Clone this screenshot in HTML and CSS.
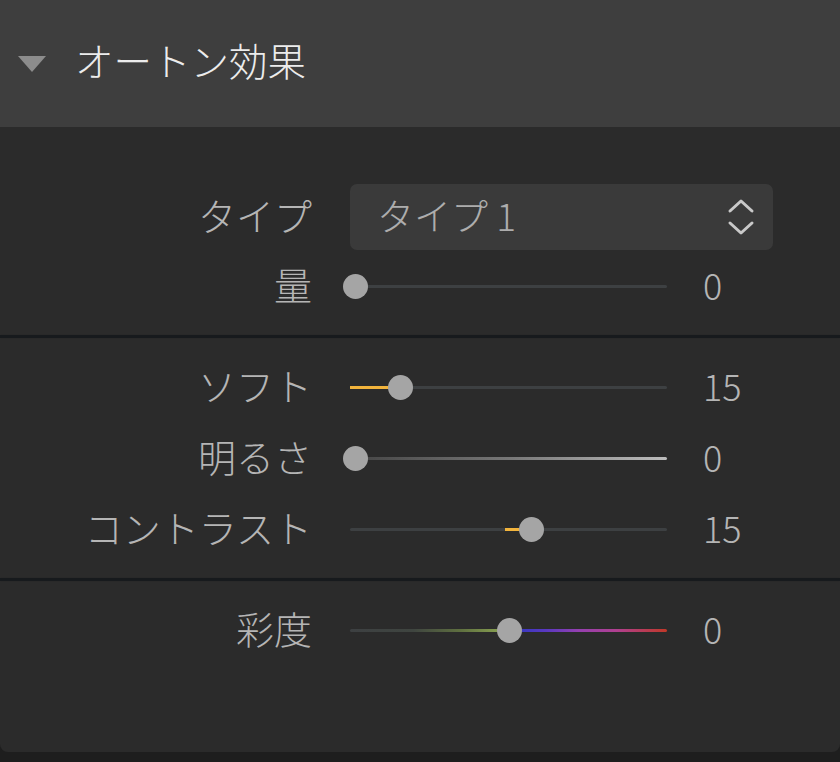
FILE: index.html
```html
<!DOCTYPE html>
<html lang="ja">
<head>
<meta charset="utf-8">
<title>オートン効果</title>
<link rel="stylesheet" href="styles.css">
</head>
<body>
<div class="panel">
  <div class="header">
    <span class="tri"></span>
    <h1 class="title">オートン効果</h1>
  </div>

  <div class="section section-first">
    <div class="row row-select">
      <span class="label">タイプ</span>
      <div class="select">
        <span class="select-text">タイプ 1</span>
        <svg class="chev" width="28" height="38" viewBox="0 0 28 38">
          <path d="M3 13 L14 3 L25 13" fill="none" stroke="#c9c9c9" stroke-width="3" stroke-linecap="round" stroke-linejoin="round"/>
          <path d="M3 25 L14 35 L25 25" fill="none" stroke="#c9c9c9" stroke-width="3" stroke-linecap="round" stroke-linejoin="round"/>
        </svg>
      </div>
    </div>
    <div class="row">
      <span class="label">量</span>
      <div class="slider">
        <div class="track"></div>
        <div class="thumb" style="left: 5px"></div>
      </div>
      <span class="val">0</span>
    </div>
  </div>

  <div class="sep"></div>

  <div class="section">
    <div class="row">
      <span class="label">ソフト</span>
      <div class="slider">
        <div class="track"></div>
        <div class="fill" style="left: 0; width: 50px"></div>
        <div class="thumb" style="left: 50px"></div>
      </div>
      <span class="val">15</span>
    </div>
    <div class="row">
      <span class="label">明るさ</span>
      <div class="slider">
        <div class="track track-bright"></div>
        <div class="thumb" style="left: 5px"></div>
      </div>
      <span class="val">0</span>
    </div>
    <div class="row">
      <span class="label">コントラスト</span>
      <div class="slider">
        <div class="track"></div>
        <div class="fill" style="left: 155px; width: 26px"></div>
        <div class="thumb" style="left: 181px"></div>
      </div>
      <span class="val">15</span>
    </div>
  </div>

  <div class="sep"></div>

  <div class="section section-last">
    <div class="row">
      <span class="label">彩度</span>
      <div class="slider">
        <div class="track track-sat"></div>
        <div class="thumb" style="left: 159px"></div>
      </div>
      <span class="val">0</span>
    </div>
  </div>
</div>
</body>
</html>
```

FILE: styles.css
```css
html, body {
  margin: 0;
  padding: 0;
  background: #1e1e1e;
}

body {
  width: 840px;
  height: 762px;
  overflow: hidden;
  font-family: "Noto Sans CJK JP", "Noto Sans", sans-serif;
}

.panel {
  width: 840px;
  height: 752px;
  background: #2b2b2b;
  border-radius: 0 0 8px 8px;
  overflow: hidden;
}

.header {
  height: 127px;
  background: #3e3e3e;
  display: flex;
  align-items: center;
  box-sizing: border-box;
  padding-bottom: 6px;
}

.tri {
  width: 0;
  height: 0;
  margin-left: 18px;
  margin-top: 6px;
  border-left: 14px solid transparent;
  border-right: 14px solid transparent;
  border-top: 16px solid #8c8c8c;
}

.title {
  margin: 0 0 0 29px;
  padding-bottom: 3px;
  font-size: 38.5px;
  font-weight: 300;
  color: #ececec;
  line-height: 1;
}

.section {
  padding: 14px 0 13px;
}

.section-first {
  padding-top: 57px;
}

.section-last {
  padding-bottom: 86px;
}

.sep {
  height: 3px;
  background: #171a1d;
  box-shadow: 0 0 1px #202326;
}

.row {
  height: 71px;
  display: flex;
  align-items: center;
}

.row-select {
  height: 66px;
  margin-bottom: 1px;
}

.label {
  width: 312px;
  text-align: right;
  font-size: 38px;
  font-weight: 300;
  color: #b5b5b5;
  line-height: 1;
  padding-bottom: 5px;
}

.select {
  margin-left: 38px;
  width: 423px;
  height: 66px;
  background: #3a3a3a;
  border-radius: 7px;
  display: flex;
  align-items: center;
  justify-content: space-between;
  box-sizing: border-box;
  padding: 0 18px 0 27px;
}

.select-text {
  font-size: 37px;
  font-weight: 300;
  color: #adadad;
  line-height: 1;
  padding-bottom: 4px;
}

.chev {
  display: block;
}

.slider {
  position: relative;
  margin-left: 38px;
  width: 317px;
  height: 26px;
}

.track {
  position: absolute;
  left: 0;
  right: 0;
  top: 11px;
  height: 3px;
  background: #3d4042;
  border-radius: 2px;
}

.track-bright {
  background: linear-gradient(to right, #444 0%, #777 50%, #bdbdbd 100%);
}

.track-sat {
  background: linear-gradient(to right,
    #3d4042 0%, #3f4540 20%, #5f7040 35%, #8aa252 48%,
    #3438c0 52%, #5a38c0 62%, #9440b0 72%, #b04090 84%, #c03828 100%);
}

.fill {
  position: absolute;
  top: 11px;
  height: 3px;
  background: #f2b43c;
}

.thumb {
  position: absolute;
  top: 0;
  width: 25px;
  height: 25px;
  margin-left: -12.5px;
  border-radius: 50%;
  background: #a5a5a5;
}

.val {
  margin-left: 36px;
  font-size: 36px;
  font-weight: 300;
  color: #b5b5b5;
  line-height: 1;
  padding-bottom: 5px;
}
```
